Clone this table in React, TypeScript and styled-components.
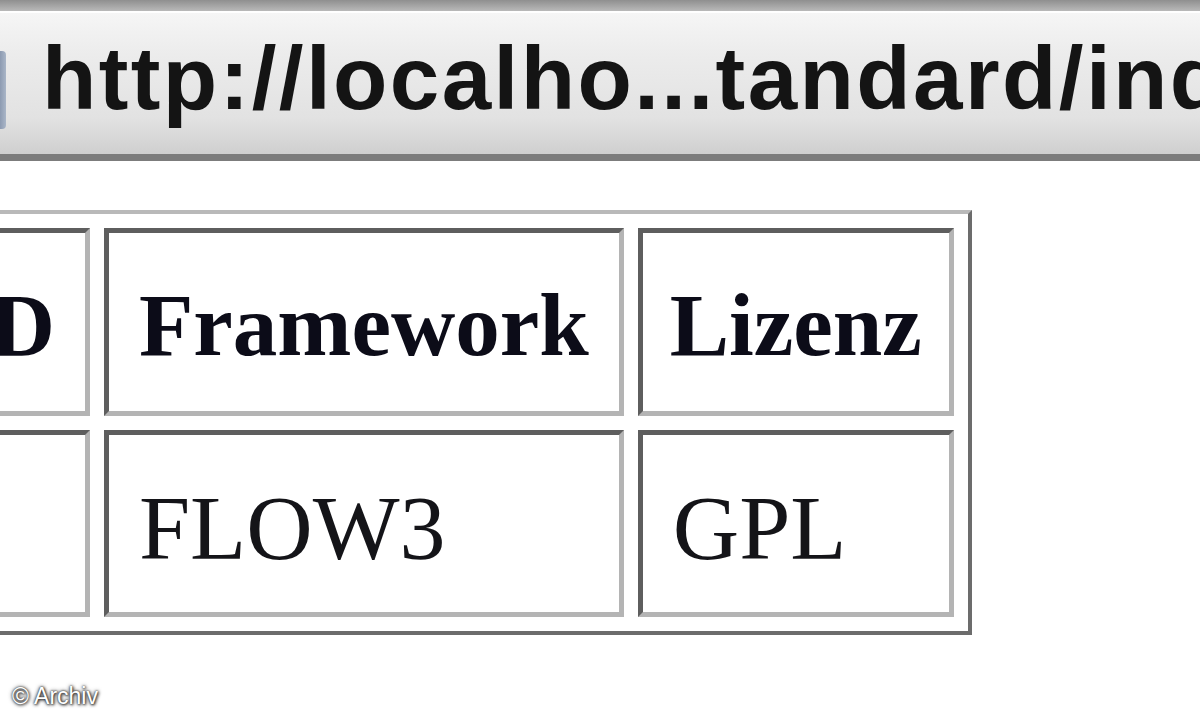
import React from "react";
import styled, { createGlobalStyle } from "styled-components";

const Global = createGlobalStyle`
  html, body { margin: 0; padding: 0; background: #ffffff; }
  body { width: 1200px; height: 720px; overflow: hidden; position: relative; font-family: "Liberation Serif", "Times New Roman", serif; }
`;

const Page = styled.div`
  width: 1200px;
  height: 720px;
  position: relative;
  overflow: hidden;
  background: #ffffff;
`;

const TopStrip = styled.div`
  height: 11px;
  background: linear-gradient(#8f8f8f, #b9b9b9);
`;

const AddressBar = styled.div`
  height: 143px;
  display: flex;
  align-items: center;
  gap: 36px;
  background: linear-gradient(#f6f6f6 0%, #ececec 30%, #e2e2e2 75%, #cfcfcf 100%);
  border-bottom: 7px solid #7c7c7c;
  box-shadow: inset 0 2px 0 #ffffff;
  overflow: hidden;
  white-space: nowrap;
`;

const Favicon = styled.div`
  flex: none;
  width: 12px;
  height: 78px;
  margin-left: -6px;
  margin-top: 14px;
  border-radius: 4px;
  background: linear-gradient(90deg, #6f7f9a, #aab6c8);
`;

const Url = styled.span`
  font-family: "Liberation Sans", Arial, sans-serif;
  font-weight: bold;
  font-size: 89px;
  color: #141414;
  letter-spacing: 2.4px;
  margin-top: -8px;
`;

const Content = styled.div`
  padding-top: 49px;
  margin-left: -97px;
`;

const Table = styled.table`
  border-collapse: separate;
  border-spacing: 14px 14px;
  border: 4px solid;
  border-color: #b9b9b9 #6c6c6c #6c6c6c #b9b9b9;
`;

const HeadCell = styled.th<{ $tight?: boolean }>`
  font-weight: bold;
  font-size: 89px;
  line-height: 100px;
  color: #0c0c18;
  text-align: center;
  padding: 42px ${(p) => (p.$tight ? "27px" : "30px")} 36px;
  border: 5px solid;
  border-color: #5e5e5e #b4b4b4 #b4b4b4 #5e5e5e;
`;

const BodyCell = styled.td`
  font-size: 92px;
  line-height: 100px;
  color: #141418;
  text-align: left;
  padding: 43px 30px 34px;
  border: 5px solid;
  border-color: #5e5e5e #b4b4b4 #b4b4b4 #5e5e5e;
`;

const Watermark = styled.div`
  position: absolute;
  left: 12px;
  bottom: 10px;
  font-family: "Liberation Sans", Arial, sans-serif;
  font-size: 23px;
  color: #ffffff;
  letter-spacing: 0;
  text-shadow: 0 0 2px #222, 0 0 4px #444, 1px 1px 3px #333;
`;

export default function App() {
  return (
    <Page>
      <Global />
      <TopStrip />
      <AddressBar>
        <Favicon />
        <Url>http://localho...tandard/index.php</Url>
      </AddressBar>
      <Content>
        <Table>
          <thead>
            <tr>
              <HeadCell>ID</HeadCell>
              <HeadCell>Framework</HeadCell>
              <HeadCell $tight>Lizenz</HeadCell>
            </tr>
          </thead>
          <tbody>
            <tr>
              <BodyCell>1</BodyCell>
              <BodyCell>FLOW3</BodyCell>
              <BodyCell>GPL</BodyCell>
            </tr>
          </tbody>
        </Table>
      </Content>
      <Watermark>© Archiv</Watermark>
    </Page>
  );
}
